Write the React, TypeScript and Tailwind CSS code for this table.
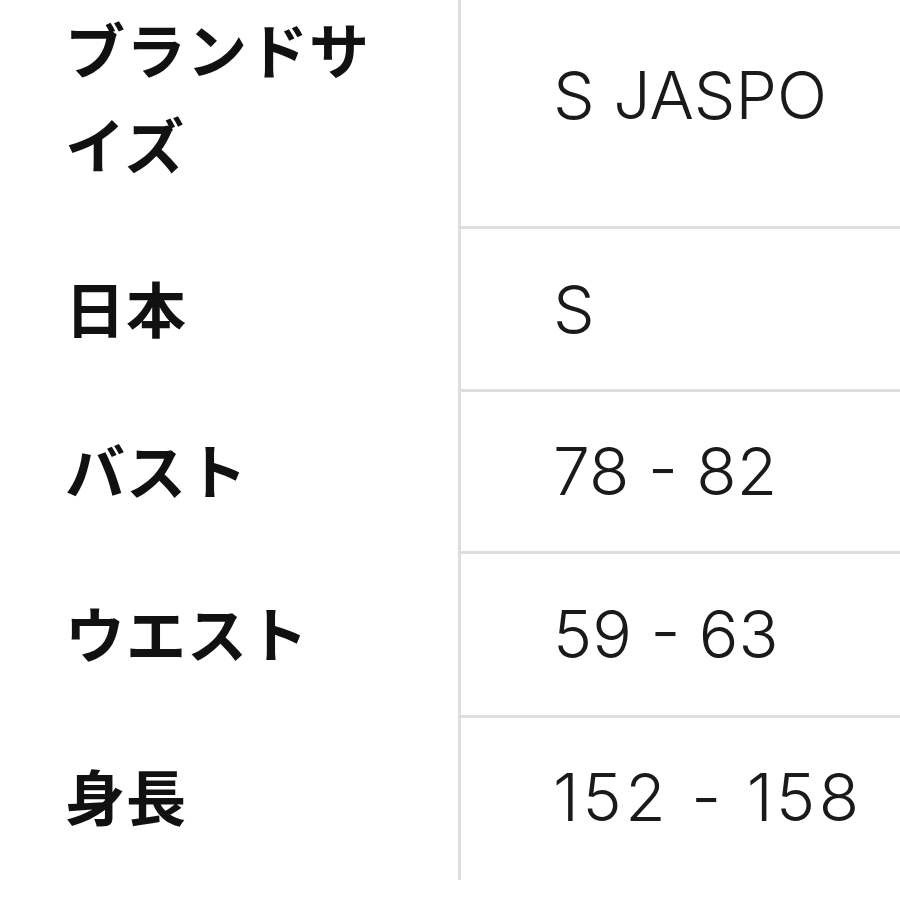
import React from "react";

interface SizeRow {
    label: string;
    value: string;
    height: string;
    tracking?: string;
}

const rows: SizeRow[] = [
    {label: "ブランドサイズ", value: "S JASPO", height: "h-[226px]"},
    {label: "日本", value: "S", height: "h-[160px]"},
    {label: "バスト", value: "78 - 82", height: "h-[159px]"},
    {label: "ウエスト", value: "59 - 63", height: "h-[161px]"},
    {label: "身長", value: "152 - 158", height: "h-[159px]", tracking: "tracking-[3.5px]"},
];

export default function App() {
    return (
        <div className="w-[900px] h-[900px] bg-white overflow-hidden">
            <div className="grid grid-cols-[458px_1fr]">
                {rows.map((row, i) => {
                    const first = i === 0;
                    const last = i === rows.length - 1;
                    return (
                        <React.Fragment key={row.label}>
                            {/* label column, no rules on this side */}
                            <div
                                className={`flex pl-[65px] pr-[50px] pb-[3px] box-content ${row.height} ${first ? "items-start" : "items-center"}`}
                            >
                                <span
                                    className={`text-[60px] leading-[95px] font-bold text-[#111] tracking-[1px] [font-family:'Noto_Sans_CJK_JP',sans-serif] ${first ? "" : "mb-[6px]"}`}
                                >
                                    {row.label}
                                </span>
                            </div>
                            <div
                                className={`flex pl-[92px] border-l-[3px] border-[#dedede] box-content ${row.height} ${first ? "items-start" : "items-center"} ${last ? "pb-[3px]" : "border-b-[3px]"}`}
                            >
                                <span
                                    className={`text-[66px] leading-[95px] font-light whitespace-nowrap text-[#1a1a1a] [font-family:Inter,sans-serif] ${row.tracking ?? ""} ${first ? "mt-[48px]" : ""}`}
                                >
                                    {row.value}
                                </span>
                            </div>
                        </React.Fragment>
                    );
                })}
            </div>
        </div>
    );
}
